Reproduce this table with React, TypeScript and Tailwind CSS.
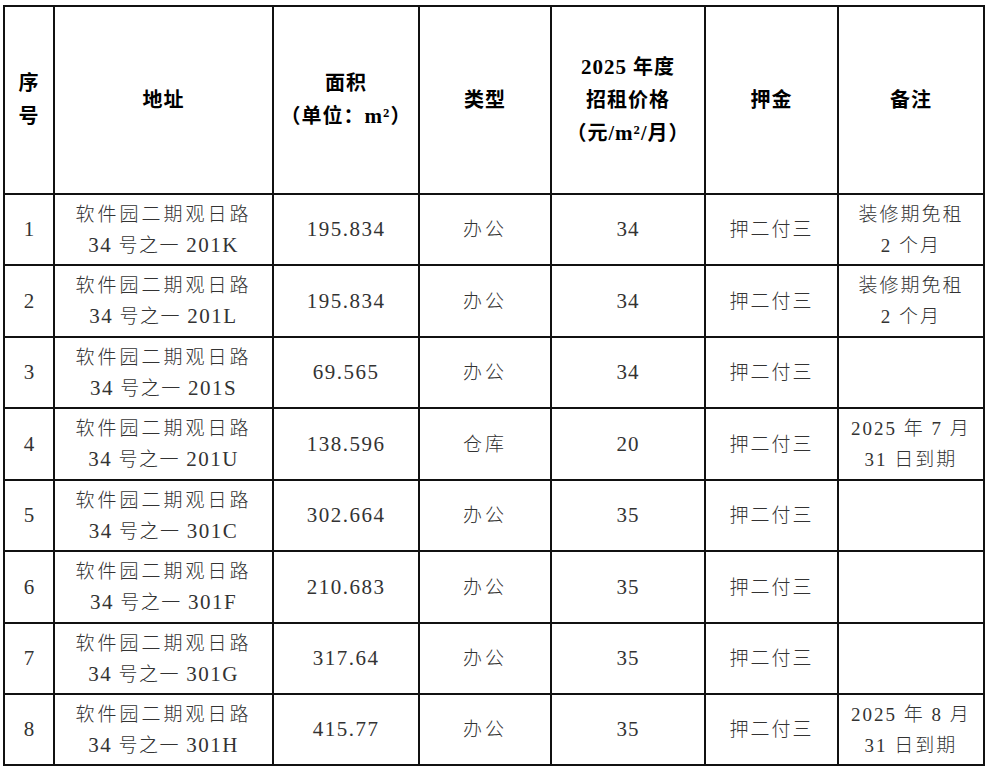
// Rental listing table — 2025 lease prices for Software Park phase II units.

const rows = [
  { no: '1', unit: '201K', area: '195.834', kind: '办公', price: '34', note: ['装修期免租', '2 个月'], h: 'h-[71px]' },
  { no: '2', unit: '201L', area: '195.834', kind: '办公', price: '34', note: ['装修期免租', '2 个月'], h: 'h-[72px]' },
  { no: '3', unit: '201S', area: '69.565', kind: '办公', price: '34', note: [], h: 'h-[71px]' },
  { no: '4', unit: '201U', area: '138.596', kind: '仓库', price: '20', note: ['2025 年 7 月', '31 日到期'], h: 'h-[72px]' },
  { no: '5', unit: '301C', area: '302.664', kind: '办公', price: '35', note: [], h: 'h-[71px]' },
  { no: '6', unit: '301F', area: '210.683', kind: '办公', price: '35', note: [], h: 'h-[72px]' },
  { no: '7', unit: '301G', area: '317.64', kind: '办公', price: '35', note: [], h: 'h-[71px]' },
  { no: '8', unit: '301H', area: '415.77', kind: '办公', price: '35', note: ['2025 年 8 月', '31 日到期'], h: 'h-[71px]' },
];

const th = 'border-2 border-[#111] text-center align-middle font-bold text-[20px] leading-[33px] text-black tracking-[1px]';
const td = 'border-2 border-[#111] text-center align-middle text-[19px] leading-[31px] text-[#333] font-light';

export default function App() {
  return (
    <div className="min-h-screen bg-white pl-[3px] pt-[5px] font-['Liberation_Serif','Noto_Sans_CJK_SC',serif]">
      <table className="w-[980px] table-fixed border-collapse">
        <colgroup>
          <col className="w-[50px]" />
          <col className="w-[219px]" />
          <col className="w-[146px]" />
          <col className="w-[132px]" />
          <col className="w-[154px]" />
          <col className="w-[133px]" />
          <col className="w-[146px]" />
        </colgroup>
        <thead>
          <tr className="h-[188px]">
            <th className={th}>
              序<br />号
            </th>
            <th className={th}>地址</th>
            <th className={th}>
              面积
              <br />
              （单位：<span className="text-[21px]">m²</span>）
            </th>
            <th className={th}>类型</th>
            <th className={th}>
              <span className="text-[21px]">2025</span> 年度
              <br />
              招租价格
              <br />
              （元/<span className="text-[21px]">m²</span>/月）
            </th>
            <th className={th}>押金</th>
            <th className={th}>备注</th>
          </tr>
        </thead>
        <tbody>
          {rows.map((r) => (
            <tr key={r.no} className={r.h}>
              <td className={`${td} text-[21px]`}>{r.no}</td>
              <td className={td}>
                <div className="tracking-[3px]">软件园二期观日路</div>
                <div className="tracking-[1.5px]">
                  <span className="text-[21px]">34</span> 号之一 <span className="text-[21px]">{r.unit}</span>
                </div>
              </td>
              <td className={`${td} text-[21px] tracking-[1.5px]`}>{r.area}</td>
              <td className={`${td} tracking-[3px]`}>{r.kind}</td>
              <td className={`${td} text-[21px] tracking-[1px]`}>{r.price}</td>
              <td className={`${td} tracking-[2px]`}>押二付三</td>
              <td className={`${td} tracking-[2px]`}>
                {r.note.map((n) => (
                  <div key={n}>{n}</div>
                ))}
              </td>
            </tr>
          ))}
        </tbody>
      </table>
    </div>
  );
}
